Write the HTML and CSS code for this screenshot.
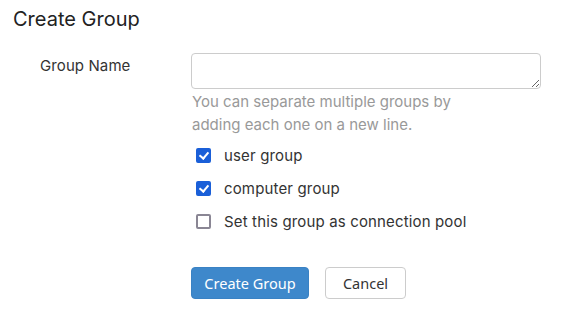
FILE: index.html
```html
<!DOCTYPE html>
<html>
<head>
<meta charset="utf-8">
<link rel="stylesheet" href="styles.css">
</head>
<body>
<div class="page">
  <h3 class="title">Create Group</h3>
  <form class="form">
    <div class="row">
      <label class="row-label">Group Name</label>
      <div class="row-controls">
        <textarea class="input"></textarea>
        <p class="help">You can separate multiple groups by<br>adding each one on a new line.</p>
        <label class="check"><span class="box checked"></span><span>user group</span></label>
        <label class="check"><span class="box checked"></span><span>computer group</span></label>
        <label class="check"><span class="box"></span><span>Set this group as connection pool</span></label>
      </div>
    </div>
    <div class="actions">
      <button type="button" class="btn btn-primary">Create Group</button>
      <button type="button" class="btn btn-default">Cancel</button>
    </div>
  </form>
</div>
</body>
</html>
```
FILE: styles.css
```css
html, body { margin: 0; padding: 0; background: #fff; }
body { font-family: Inter, "Noto Sans", sans-serif; color: #333; }
.page { padding: 7px 0 0 13px; }
.title { margin: 0; font-size: 20px; font-weight: 400; line-height: 24px; color: #222; }
.form { margin-top: 22px; }
.row { display: flex; }
.row-label { width: 151px; padding-left: 27px; font-size: 15px; line-height: 20px; color: #333; padding-top: 3px; letter-spacing: 0.1px; }
.row-controls { display: flex; flex-direction: column; }
.input { display: block; box-sizing: border-box; width: 350px; height: 36px; border: 1px solid #ccc; border-radius: 4px; margin: 0; resize: vertical; }
.help { margin: 1px 0 0 1px; font-size: 15px; line-height: 23px; color: #999; }
.check { display: flex; align-items: center; gap: 13px; height: 33px; font-size: 15px; color: #333; margin-left: 5px; letter-spacing: 0.15px; }
.check:first-of-type { margin-top: 3px; }
.box { box-sizing: border-box; width: 15px; height: 15px; border: 2px solid #8a8694; border-radius: 2px; position: relative; flex: none; }
.box.checked { background: #1a5fd8; border-color: #1a5fd8; }
.box.checked::after { content: ""; position: absolute; left: 3px; top: 0px; width: 4px; height: 7px; border: solid #fff; border-width: 0 2px 2px 0; transform: rotate(40deg); }
.actions { display: flex; gap: 16px; margin: 29px 0 0 178px; }
.btn { font-family: "Noto Sans", sans-serif; font-size: 14.5px; height: 32px; border-radius: 4px; padding: 0 10px; cursor: pointer; }
.btn-primary { background: #3e88cb; border: 1px solid #3a82c4; color: #fff; width: 118px; }
.btn-default { background: #fff; border: 1px solid #ccc; color: #333; width: 81px; }
```
